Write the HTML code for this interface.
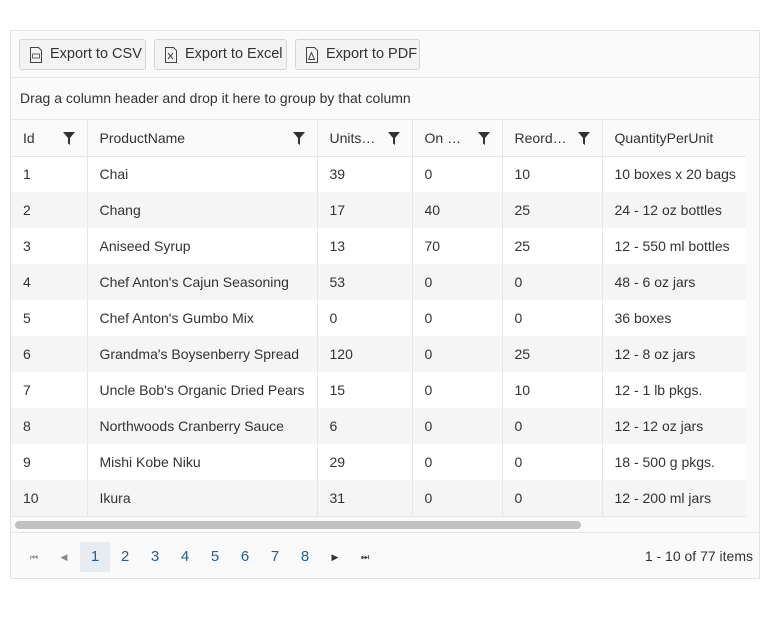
<!DOCTYPE html>
<html><head><style>
*{box-sizing:border-box;margin:0;padding:0}
body{width:770px;height:639px;background:#fff;font-family:"Liberation Sans",sans-serif;font-size:14px;color:#333;position:relative}
.g{position:absolute;left:10px;top:30px;width:750px;height:549px;border:1px solid #e3e3e3;background:#fafafa;overflow:hidden}
.tb{position:absolute;left:0;top:0;width:750px;height:47px;border-bottom:1px solid #e6e6e6;background:#fafafa}
.btn{position:absolute;top:8px;height:31px;border:1px solid #d5d5d5;border-radius:3px;background:#f3f3f3;line-height:29px;padding-left:30px;font-size:14.5px;color:#333;white-space:nowrap}
.btn svg{position:absolute;left:9px;top:7px}
.gp{position:absolute;left:0;top:47px;width:750px;height:42px;line-height:40px;padding-left:9px;border-bottom:1px solid #e6e6e6;font-size:14px;white-space:nowrap}
table{position:absolute;left:0;top:89px;border-collapse:collapse;table-layout:fixed;width:735px;background:#fff}
td,th{height:36px;padding-left:12px;text-align:left;font-weight:normal;border-left:1px solid #e6e6e6;white-space:nowrap;overflow:hidden;position:relative}
td:first-child,th:first-child{border-left:none}
th{height:36px;background:#fafafa;border-bottom:1px solid #e6e6e6}
tr:nth-child(odd) td{background:#f5f5f5}
tr:last-child td{border-bottom:1px solid #e6e6e6}
.f{position:absolute;right:12px;top:12px}
.sb{position:absolute;left:4px;top:490px;width:566px;height:8px;border-radius:4px;background:#c1c1c1}
.pg{position:absolute;left:0;top:501px;width:750px;height:48px;border-top:1px solid #e6e6e6}
.pg span{position:absolute;top:9px;width:30px;height:30px;line-height:30px;text-align:center;color:#1f5f9a;font-size:15px}
.pg .a{background:#e6ecf1}
.pg .n{color:#888;font-size:9px}
.info{position:absolute;right:8px;top:15px;color:#333}
</style></head><body>
<div class="g">
<div class="tb">
<div class="btn" style="left:8px;width:127px"><svg width="14" height="16" viewBox="0 0 14 16"><path d="M1.5 .5h8l3 3v12h-11z" fill="none" stroke="#444"/><rect x="3.5" y="7" width="7" height="4" fill="none" stroke="#444" stroke-width=".8"/></svg>Export to CSV</div>
<div class="btn" style="left:143px;width:133px"><svg width="14" height="16" viewBox="0 0 14 16"><path d="M1.5 .5h8l3 3v12h-11z" fill="none" stroke="#444"/><path d="M4 6l5 6M9 6l-5 6" stroke="#444"/></svg>Export to Excel</div>
<div class="btn" style="left:284px;width:125px"><svg width="14" height="16" viewBox="0 0 14 16"><path d="M1.5 .5h8l3 3v12h-11z" fill="none" stroke="#444"/><path d="M3.5 12.5l3-7 3 7h-6" fill="none" stroke="#444"/></svg>Export to PDF</div>
</div>
<div class="gp">Drag a column header and drop it here to group by that column</div>
<table>
<colgroup><col style="width:76px"><col style="width:230px"><col style="width:95px"><col style="width:90px"><col style="width:100px"><col style="width:144px"></colgroup>
<tr><th>Id<svg class="f" width="12" height="13" viewBox="0 0 12 13"><path d="M0 0h12L7 6v7L5 11.5V6z" fill="#333"/></svg></th><th>ProductName<svg class="f" width="12" height="13" viewBox="0 0 12 13"><path d="M0 0h12L7 6v7L5 11.5V6z" fill="#333"/></svg></th><th>Units…<svg class="f" width="12" height="13" viewBox="0 0 12 13"><path d="M0 0h12L7 6v7L5 11.5V6z" fill="#333"/></svg></th><th>On …<svg class="f" width="12" height="13" viewBox="0 0 12 13"><path d="M0 0h12L7 6v7L5 11.5V6z" fill="#333"/></svg></th><th>Reord…<svg class="f" width="12" height="13" viewBox="0 0 12 13"><path d="M0 0h12L7 6v7L5 11.5V6z" fill="#333"/></svg></th><th>QuantityPerUnit</th></tr>
<tr><td>1</td><td>Chai</td><td>39</td><td>0</td><td>10</td><td>10 boxes x 20 bags</td></tr>
<tr><td>2</td><td>Chang</td><td>17</td><td>40</td><td>25</td><td>24 - 12 oz bottles</td></tr>
<tr><td>3</td><td>Aniseed Syrup</td><td>13</td><td>70</td><td>25</td><td>12 - 550 ml bottles</td></tr>
<tr><td>4</td><td>Chef Anton's Cajun Seasoning</td><td>53</td><td>0</td><td>0</td><td>48 - 6 oz jars</td></tr>
<tr><td>5</td><td>Chef Anton's Gumbo Mix</td><td>0</td><td>0</td><td>0</td><td>36 boxes</td></tr>
<tr><td>6</td><td>Grandma's Boysenberry Spread</td><td>120</td><td>0</td><td>25</td><td>12 - 8 oz jars</td></tr>
<tr><td>7</td><td>Uncle Bob's Organic Dried Pears</td><td>15</td><td>0</td><td>10</td><td>12 - 1 lb pkgs.</td></tr>
<tr><td>8</td><td>Northwoods Cranberry Sauce</td><td>6</td><td>0</td><td>0</td><td>12 - 12 oz jars</td></tr>
<tr><td>9</td><td>Mishi Kobe Niku</td><td>29</td><td>0</td><td>0</td><td>18 - 500 g pkgs.</td></tr>
<tr><td>10</td><td>Ikura</td><td>31</td><td>0</td><td>0</td><td>12 - 200 ml jars</td></tr>
</table>
<div class="sb"></div>
<div class="pg">
<span class="n" style="left:8px">⏮</span><span class="n" style="left:38px">◀</span>
<span class="a" style="left:69px">1</span><span style="left:99px">2</span><span style="left:129px">3</span><span style="left:159px">4</span><span style="left:189px">5</span><span style="left:219px">6</span><span style="left:249px">7</span><span style="left:279px">8</span>
<span class="n" style="left:309px;color:#333">▶</span><span class="n" style="left:339px;color:#333">⏭</span>
<div class="info">1 - 10 of 77 items</div>
</div>
</div>
</body></html>
